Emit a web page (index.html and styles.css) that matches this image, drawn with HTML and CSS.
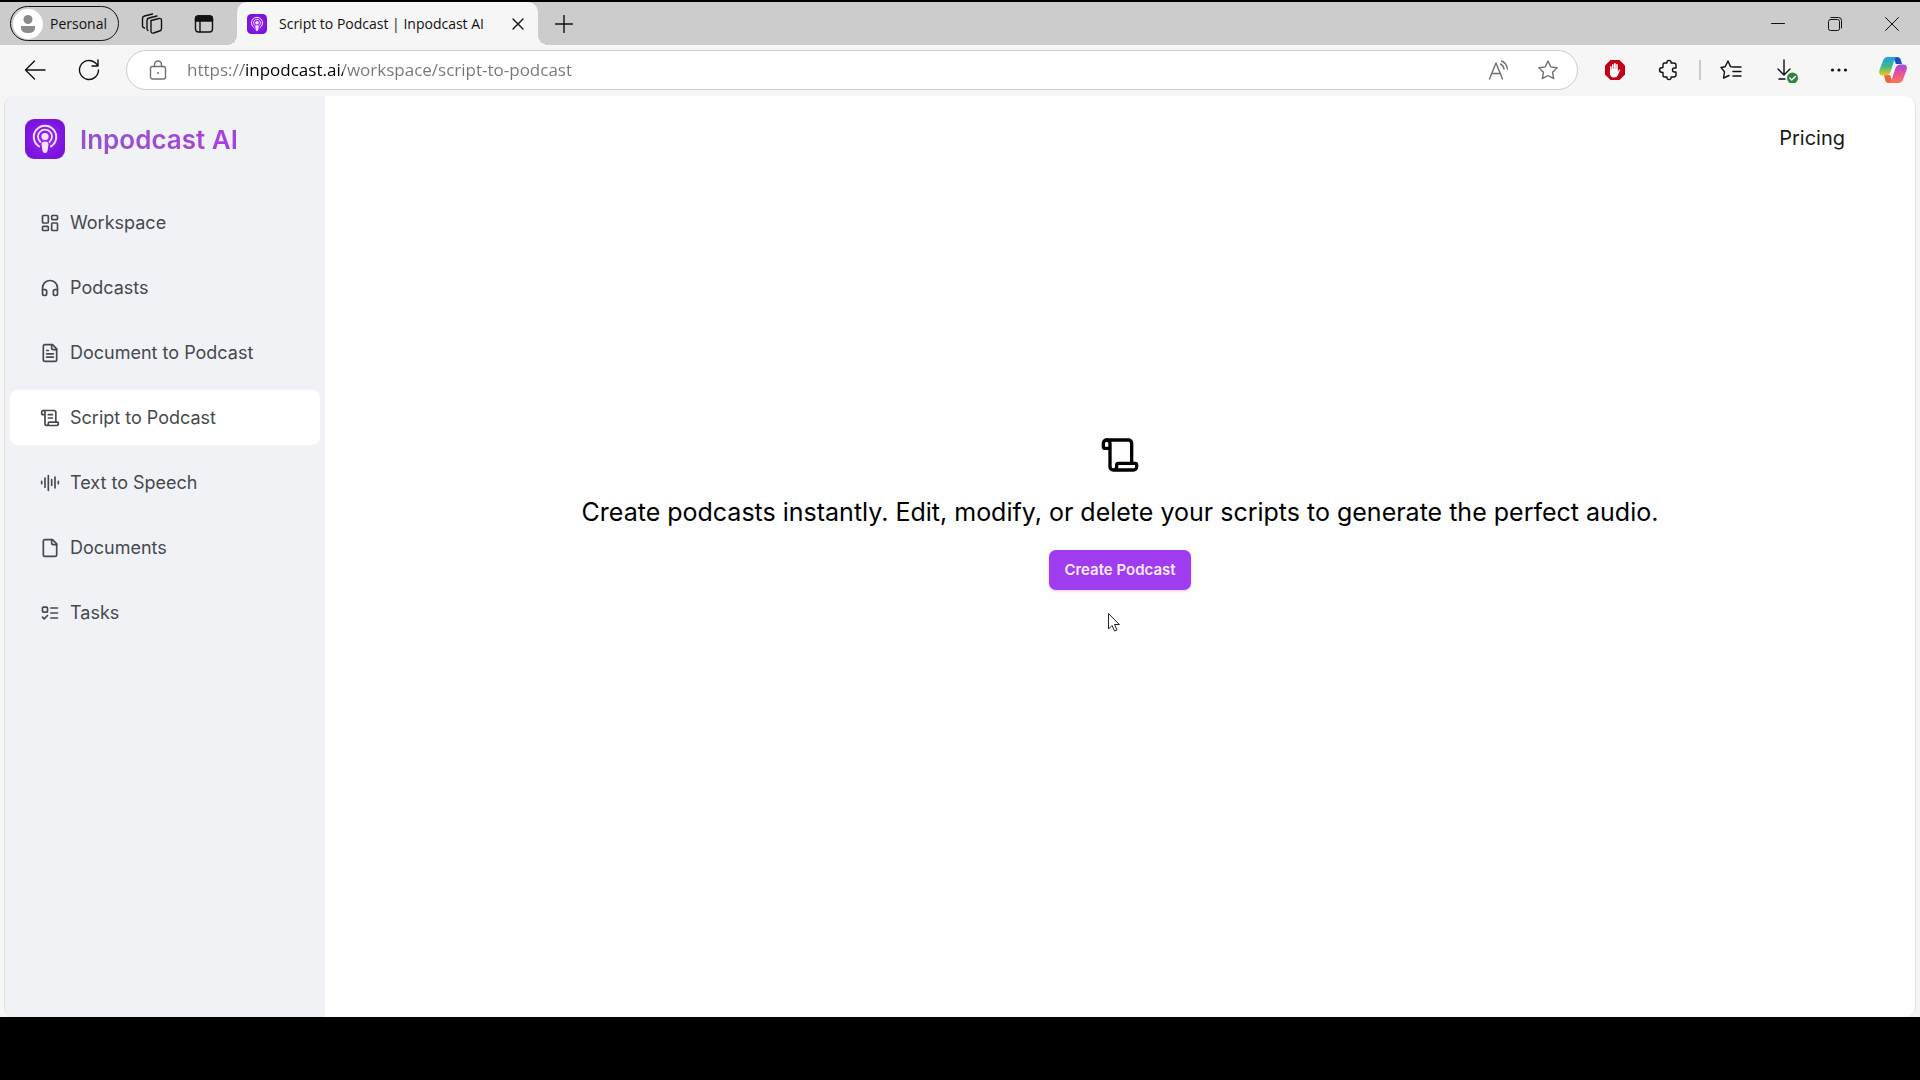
FILE: index.html
```html
<!DOCTYPE html>
<html lang="en">
<head>
    <meta charset="UTF-8">
    <meta name="viewport" content="width=device-width, initial-scale=1.0">
    <title>Script to Podcast | Inpodcast AI</title>
    <link rel="stylesheet" href="styles.css">
</head>
<body>
    <!-- shared gradient and logo -->
    <svg class="defs" width="0" height="0" aria-hidden="true">
        <defs>
            <radialGradient id="logo-bg">
                <stop offset="0" stop-color="#a024ff"/>
                <stop offset="1" stop-color="#7a14dc"/>
            </radialGradient>
            <symbol id="logo" viewBox="0 0 40 40">
                <rect width="40" height="40" rx="9" fill="url(#logo-bg)"/>
                <g fill="none" stroke="#f6e4ff" stroke-linecap="round">
                    <path d="M14 27.400a11.200 11.200 0 1 1 12 0" stroke-width="2"/>
                    <path d="M15.500 23a7 7 0 1 1 9 0" stroke-width="1.800"/>
                </g>
                <circle cx="20" cy="17.500" r="3.600" fill="#f6e4ff"/>
                <path d="M16.500 25q0-2.500 3.500-2.500t3.500 2.500l-1 7q-.5 2-2.500 2t-2.500-2z" fill="#f6e4ff"/>
            </symbol>
        </defs>
    </svg>

    <div class="tab-bar">
        <button class="profile">
            <svg class="solid" width="30" height="30" viewBox="0 0 30 30"><circle cx="15" cy="15" r="15" fill="#fff"/><circle cx="15" cy="10.500" r="4.500" fill="#8a8a8a"/><path d="M8 17h14v2q0 5-7 5t-7-5z" fill="#8a8a8a"/></svg>
            Personal
        </button>
        <div class="tab-actions">
            <button aria-label="Workspaces">
                <svg width="22" height="22" viewBox="0 0 22 22"><path d="M10 7.500l8-2q2.500-.5 2.500 2v8q0 2-2 2.500l-6 2q-2.500.5-2.500-2zM7 17.500q-1-.5-1-2V7.500q0-2 2-2.500l8-2M3.500 15q-2-.5-2-2V5.500q0-2 2-2.500l8-2"/></svg>
            </button>
            <button aria-label="Tab actions">
                <svg width="20" height="20" viewBox="0 0 20 20"><rect x="1.500" y="2" width="17" height="16" rx="3"/><path d="M1.500 7V5q0-3 3-3h11q3 0 3 3v2z" fill="currentColor"/><path d="M6 7v11"/></svg>
            </button>
        </div>
        <div class="tab">
            <svg width="20" height="20"><use href="#logo"/></svg>
            <span class="tab-title">Script to Podcast | Inpodcast AI</span>
            <button aria-label="Close tab"><svg width="12" height="12" viewBox="0 0 12 12"><path d="M1 1l10 10M11 1L1 11"/></svg></button>
        </div>
        <button class="new-tab" aria-label="New tab"><svg width="18" height="18" viewBox="0 0 18 18"><path d="M9 .5v17M.5 9h17"/></svg></button>
        <div class="window-controls">
            <button aria-label="Minimize"><svg width="14" height="14" viewBox="0 0 14 14"><path d="M.5 6.500h13"/></svg></button>
            <button aria-label="Restore"><svg width="14" height="14" viewBox="0 0 14 14"><rect x=".5" y="2.500" width="11" height="11" rx="2"/><path d="M3 .5h7.500q3 0 3 3V11"/></svg></button>
            <button aria-label="Close"><svg width="14" height="14" viewBox="0 0 14 14"><path d="M.5.5l13 13M13.500.5l-13 13"/></svg></button>
        </div>
    </div>

    <div class="toolbar">
        <div class="tools">
            <button aria-label="Back"><svg width="22" height="22" viewBox="0 0 22 22"><path d="M21 11H2M10.500 2L1.500 11l9 9"/></svg></button>
            <button aria-label="Refresh"><svg width="22" height="22" viewBox="0 0 22 22"><path d="M20.500 11a9.500 9.500 0 1 1-3.500-7.400L19.500 6M20 1v6h-6"/></svg></button>
        </div>
        <div class="address">
            <svg width="18" height="20" viewBox="0 0 18 20"><rect x="1.500" y="6.500" width="15" height="12.500" rx="2"/><path d="M5.500 6.500V4.500a3.500 3.500 0 0 1 7 0v2"/><circle cx="9" cy="13" r="1" fill="currentColor" stroke-width="0"/></svg>
            <input type="text" aria-label="Address" value="https://inpodcast.ai/workspace/script-to-podcast">
            <button aria-label="Read aloud"><svg width="22" height="22" viewBox="0 0 22 22"><path d="M1.500 20L8 4l6.500 16M4 14.500h8M12.500 5q3 1.500 3.500 5M13.500 2q5 2 6 8"/></svg></button>
            <button aria-label="Add to favorites"><svg width="22" height="22" viewBox="0 0 22 22"><path d="M11 2l2.800 5.900 6.400.8-4.700 4.500 1.200 6.400L11 16.500l-5.700 3.100 1.200-6.400L1.800 8.700l6.400-.8z"/></svg></button>
        </div>
        <div class="tools">
            <button aria-label="AdBlock"><svg class="solid" width="22" height="22" viewBox="0 0 22 22"><path d="M6.500 1h9L21 6.500v9L15.500 21h-9L1 15.500v-9z" fill="#c30016"/><path d="M6 12V8q0-1 .8-1t.8 1v2.500h.4V6q0-1 .8-1t.8 1v4h.4V5q0-1 .9-1t.9 1v5h.4V6q0-1 .8-1t.8 1v7l1-2q.8-1 1.600-.4L14 16q-1 2.500-4 2.500-4 0-4-4z" fill="#fff"/></svg></button>
            <button aria-label="Extensions"><svg width="22" height="22" viewBox="0 0 22 22"><path d="M5 5.500Q5 4 6.500 4H9q-.5-2.500 2-2.500T13 4h2.500Q18 4 18 6v3h-1.500q-2 0-2 2t2 2H18v3q0 2-2.500 2H13q.5 2.500-2 2.500T9 18H6.500Q5 18 5 16v-2.500q-3.500 0-3.500-2.500T5 8.500z"/></svg></button>
            <span class="divider"></span>
            <button aria-label="Favorites"><svg width="22" height="22" viewBox="0 0 22 22"><path d="M13 8l-2.500-.4L8 2 5.200 7.800 1 8.500l3.500 4.300L3.500 19 9 16.500M14 8h7M13 12.500h8M13 17h8"/></svg></button>
            <button aria-label="Downloads"><svg width="26" height="26" viewBox="0 0 26 26"><path d="M12 3v15M6 12l6 6 6-6M7 22h6"/><g class="solid"><circle cx="20.500" cy="21" r="5.500" fill="#2a8440"/></g><path d="M17.800 21l2 2 3.500-3.500" class="check"/></svg></button>
            <button aria-label="Settings and more"><svg class="solid" width="18" height="18" viewBox="0 0 18 18"><circle cx="2.500" cy="9" r="1.600"/><circle cx="9" cy="9" r="1.600"/><circle cx="15.500" cy="9" r="1.600"/></svg></button>
            <button aria-label="Copilot">
                <svg class="solid" width="28" height="28" viewBox="0 0 28 28">
                    <defs>
                        <linearGradient id="cp-left" x1="0" y1="0" x2="0" y2="1"><stop offset="0" stop-color="#1c9de8"/><stop offset=".5" stop-color="#3fb98a"/><stop offset="1" stop-color="#f2c616"/></linearGradient>
                        <linearGradient id="cp-right" x1="0" y1="0" x2="0" y2="1"><stop offset="0" stop-color="#a44be0"/><stop offset=".5" stop-color="#e8509c"/><stop offset="1" stop-color="#fb7a50"/></linearGradient>
                    </defs>
                    <path d="M14 1h4.500q2.500 0 3.200 2.500L23 8h-6z" fill="#1750c4"/>
                    <path d="M14 27H9.500q-2.500 0-3.200-2.500L5 19h6z" fill="#ee6440"/>
                    <path d="M8.500 1H18q-2 .5-3 4l-3.500 11q-1 3-4 3.500H4Q-1 19.500.5 14L4 4.500Q5.500 1 8.500 1z" fill="url(#cp-left)"/>
                    <path d="M19.500 27H10q2-.5 3-4l3.500-11q1-3 4-3.500H24q5 0 3.500 5.500L24 23.500q-1.500 3.500-4.500 3.500z" fill="url(#cp-right)"/>
                </svg>
            </button>
        </div>
    </div>

    <div class="page">
        <aside class="sidebar">
            <a class="brand" href="#">
                <svg width="40" height="40"><use href="#logo"/></svg>
                <span>Inpodcast AI</span>
            </a>
            <nav>
                <a href="#"><svg viewBox="0 0 24 24"><rect width="7" height="9" x="3" y="3" rx="1"/><rect width="7" height="5" x="14" y="3" rx="1"/><rect width="7" height="9" x="14" y="12" rx="1"/><rect width="7" height="5" x="3" y="16" rx="1"/></svg>Workspace</a>
                <a href="#"><svg viewBox="0 0 24 24"><path d="M3 14h3a2 2 0 0 1 2 2v3a2 2 0 0 1-2 2H5a2 2 0 0 1-2-2v-7a9 9 0 0 1 18 0v7a2 2 0 0 1-2 2h-1a2 2 0 0 1-2-2v-3a2 2 0 0 1 2-2h3"/></svg>Podcasts</a>
                <a href="#"><svg viewBox="0 0 24 24"><path d="M15 2H6a2 2 0 0 0-2 2v16a2 2 0 0 0 2 2h12a2 2 0 0 0 2-2V7Z"/><path d="M14 2v4a2 2 0 0 0 2 2h4M10 9H8M16 13H8M16 17H8"/></svg>Document to Podcast</a>
                <a href="#" class="active"><svg viewBox="0 0 24 24"><path d="M15 12h-5M15 8h-5M19 17V5a2 2 0 0 0-2-2H4"/><path d="M8 21h12a2 2 0 0 0 2-2v-1a1 1 0 0 0-1-1H11a1 1 0 0 0-1 1v1a2 2 0 1 1-4 0V5a2 2 0 1 0-4 0v2a1 1 0 0 0 1 1h3"/></svg>Script to Podcast</a>
                <a href="#"><svg viewBox="0 0 24 24"><path d="M2 10v3M6 6v11M10 3v18M14 8v7M18 5v13M22 10v3"/></svg>Text to Speech</a>
                <a href="#"><svg viewBox="0 0 24 24"><path d="M15 2H6a2 2 0 0 0-2 2v16a2 2 0 0 0 2 2h12a2 2 0 0 0 2-2V7Z"/><path d="M14 2v4a2 2 0 0 0 2 2h4"/></svg>Documents</a>
                <a href="#"><svg viewBox="0 0 24 24"><rect x="3" y="5" width="6" height="6" rx="1"/><path d="m3 17 2 2 4-4M13 6h8M13 12h8M13 18h8"/></svg>Tasks</a>
            </nav>
        </aside>
        <main>
            <header>
                <a href="#">Pricing</a>
            </header>
            <section class="empty">
                <svg width="40" height="40" viewBox="0 0 24 24"><path d="M19 17V5a2 2 0 0 0-2-2H4"/><path d="M8 21h12a2 2 0 0 0 2-2v-1a1 1 0 0 0-1-1H11a1 1 0 0 0-1 1v1a2 2 0 1 1-4 0V5a2 2 0 1 0-4 0v2a1 1 0 0 0 1 1h3"/></svg>
                <p>Create podcasts instantly. Edit, modify, or delete your scripts to generate the perfect audio.</p>
                <button class="create">Create Podcast</button>
                <svg class="cursor" width="14" height="20" viewBox="0 0 14 20"><path d="M1.500 1v15l3.500-3.500 2.500 5.500 2.500-1-2.500-5.500h4.500z"/></svg>
            </section>
        </main>
    </div>
</body>
</html>
```

FILE: styles.css
```css
* {
    box-sizing: border-box;
}
body {
    margin: 0;
    min-height: 100vh;
    display: flex;
    flex-direction: column;
    padding: 2px 0 63px;
    background-color: #000;
    font-family: Inter, sans-serif;
}
a {
    color: inherit;
    text-decoration: none;
}
button {
    display: flex;
    align-items: center;
    justify-content: center;
    padding: 0;
    border: none;
    background: none;
    color: inherit;
    font: inherit;
}
svg {
    flex-shrink: 0;
    fill: none;
    stroke: currentColor;
    stroke-linecap: round;
    stroke-linejoin: round;
}
.defs {
    position: absolute;
}
symbol {
    stroke: none;
}
.solid {
    fill: currentColor;
    stroke: none;
}
.check {
    stroke: #fff;
}

/* browser tabs */
.tab-bar {
    display: flex;
    align-items: center;
    height: 43px;
    padding-left: 10px;
    background-color: #ccc;
    color: #111;
    font-family: "Open Sans", sans-serif;
    font-size: 14px;
}
.tab-bar svg {
    stroke-width: 1.4;
}
.profile {
    height: 35px;
    padding: 0 11px 0 2px;
    gap: 7px;
    border: 1px solid #111;
    border-radius: 18px;
}
.tab-actions {
    display: flex;
    margin: 0 7px;
}
.tab-actions button {
    width: 52px;
    height: 36px;
}
.tab {
    position: relative;
    display: flex;
    align-items: center;
    gap: 12px;
    width: 301px;
    height: 43px;
    padding: 0 10px;
    border-radius: 10px 10px 0 0;
    background-color: #f6f6f6;
}
/* flared bottom corners of the active tab */
.tab::before, .tab::after {
    content: "";
    position: absolute;
    bottom: 0;
    width: 10px;
    height: 10px;
}
.tab::before {
    right: 100%;
    background: radial-gradient(circle at 0 0, transparent 10px, #f6f6f6 10px);
}
.tab::after {
    left: 100%;
    background: radial-gradient(circle at 100% 0, transparent 10px, #f6f6f6 10px);
}
.tab-title {
    flex: 1;
    white-space: nowrap;
}
.tab button {
    width: 20px;
    height: 20px;
}
.new-tab {
    width: 52px;
    height: 36px;
}
.window-controls {
    display: flex;
    margin-left: auto;
}
.window-controls button {
    width: 57px;
    height: 43px;
}
.window-controls svg {
    stroke-width: 1;
}

/* address bar */
.toolbar {
    display: flex;
    align-items: center;
    gap: 13px;
    height: 50px;
    padding: 0 3px 0 11px;
    background-color: #f6f6f6;
    color: #111;
}
.toolbar svg {
    stroke-width: 1.4;
}
.tools {
    display: flex;
    align-items: center;
    gap: 6px;
}
.tools button {
    width: 48px;
    height: 40px;
}
.divider {
    width: 2px;
    height: 20px;
    background-color: #ccc;
}
.address {
    flex: 1;
    display: flex;
    align-items: center;
    height: 40px;
    padding: 0 5px 0 22px;
    border: 1px solid #ccc;
    border-radius: 20px;
    background-color: #fff;
    color: #707070;
}
.address input {
    flex: 1;
    margin-left: 20px;
    padding: 0;
    border: none;
    outline: none;
    /* the host name is darker than the rest of the url */
    background: linear-gradient(to right, #767676 57px, #000 57px, #000 156px, #767676 156px);
    -webkit-background-clip: text;
    background-clip: text;
    color: transparent;
    font-family: "Open Sans", sans-serif;
    font-size: 17px;
    line-height: 28px;
}
.address button {
    width: 49px;
    height: 36px;
}

/* page */
.page {
    flex: 1;
    display: flex;
    padding: 1px 4px 0;
    background-color: #f6f6f6;
}
.sidebar {
    width: 321px;
    padding: 23px 5px;
    border-left: 1px solid #e2e2e4;
    border-radius: 10px 0 0 10px;
    background-color: #f1f2f5;
}
.brand {
    display: flex;
    align-items: center;
    gap: 15px;
    padding-left: 15px;
    font-size: 26px;
    font-weight: 600;
}
.brand span {
    background: linear-gradient(to right, #9355c8, #a93fe0);
    -webkit-background-clip: text;
    background-clip: text;
    color: transparent;
}
nav {
    display: flex;
    flex-direction: column;
    gap: 10px;
    margin-top: 36px;
}
nav a {
    display: flex;
    align-items: center;
    gap: 10px;
    height: 55px;
    padding-left: 30px;
    border-radius: 8px;
    color: #45494f;
    font-size: 18px;
    font-weight: 400;
}
nav a.active {
    background-color: #fff;
}
nav svg {
    width: 20px;
    height: 20px;
    stroke-width: 2;
}
main {
    flex: 1;
    display: flex;
    flex-direction: column;
    border-right: 1px solid #e4e4e4;
    border-radius: 0 10px 10px 0;
    background-color: #fefefe;
}
header {
    display: flex;
    justify-content: flex-end;
    padding: 30px 70px;
    color: #18181b;
    font-size: 20px;
    line-height: 24px;
}
.empty {
    position: relative;
    flex: 1;
    display: flex;
    flex-direction: column;
    align-items: center;
    justify-content: center;
    gap: 20px;
    padding-bottom: 173px;
}
.empty svg {
    stroke-width: 2;
}
.empty p {
    margin: 0;
    font-size: 25px;
    line-height: 35px;
}
.create {
    height: 40px;
    padding: 0 15px;
    border-radius: 7px;
    background-color: #9f3cf0;
    box-shadow: 0 1px 3px #e9c8ff;
    color: #fbeaff;
    font-size: 15px;
    font-weight: 600;
}
.empty .cursor {
    position: absolute;
    top: 433px;
    left: calc(50% - 13px);
    fill: #fff;
    stroke: #222;
    stroke-width: 1;
}
```
